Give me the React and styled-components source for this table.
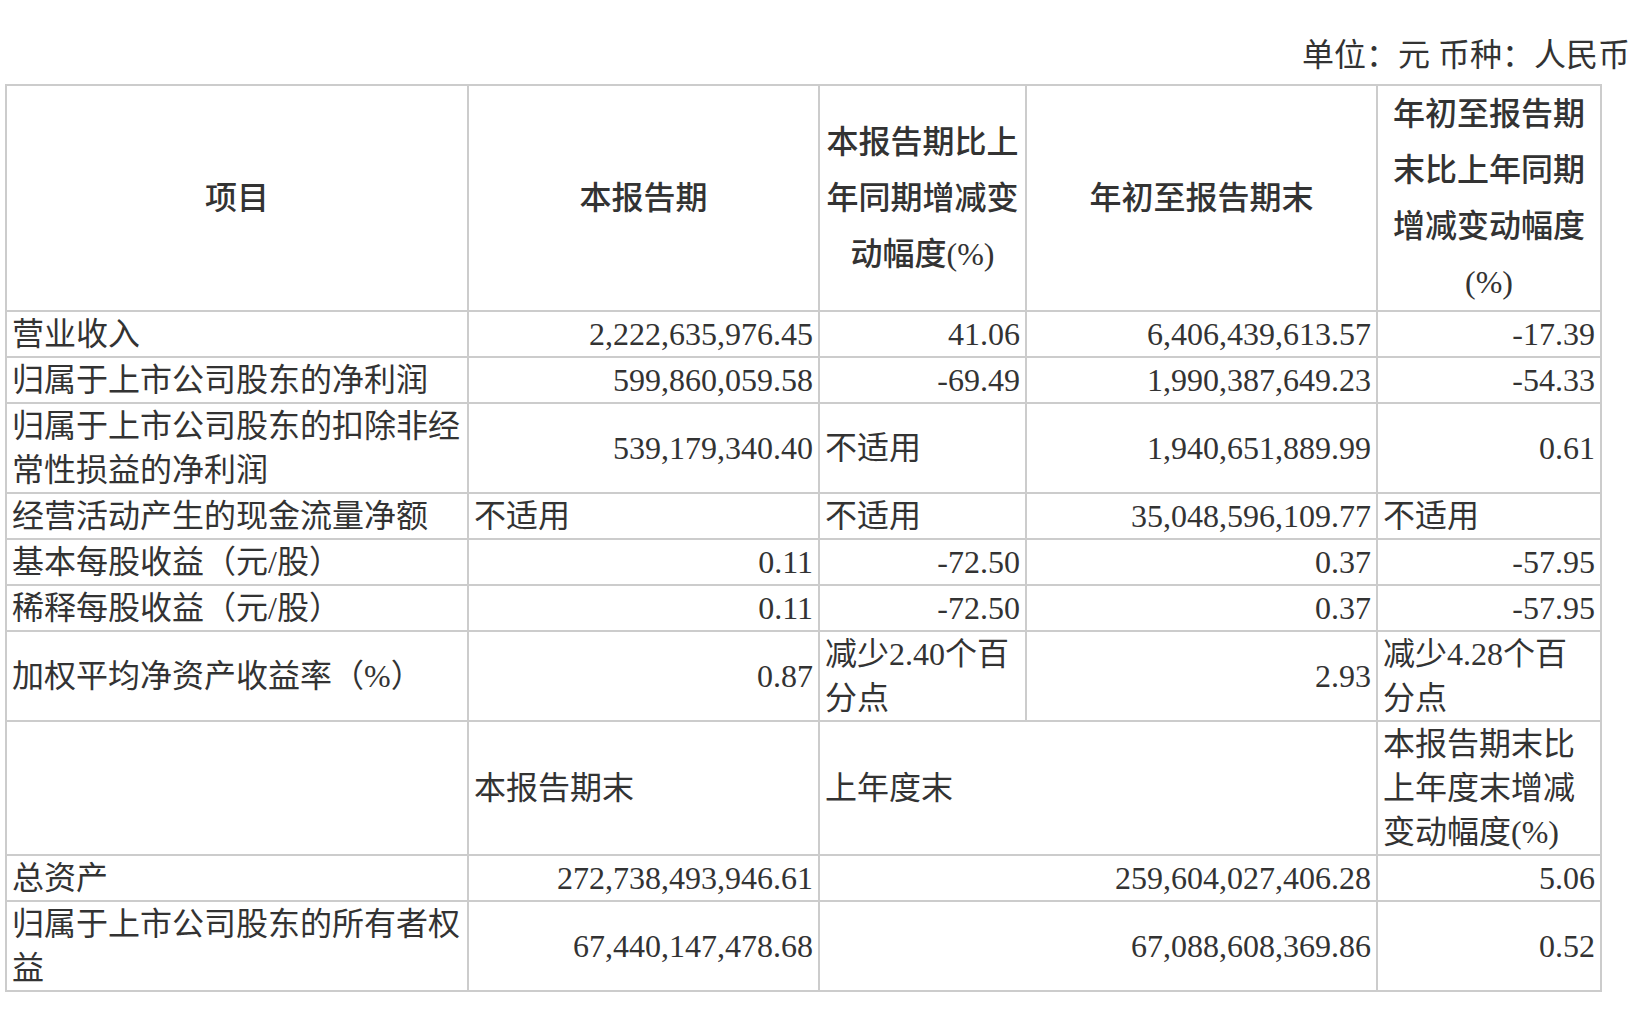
import React from "react";
import styled, { createGlobalStyle } from "styled-components";

const GlobalStyle = createGlobalStyle`
  html, body { margin: 0; padding: 0; background: #ffffff; }
  body {
    font-family: "Liberation Serif", "Noto Sans CJK SC", serif;
    color: #333333;
  }
`;

const Page = styled.div`
  width: 1650px;
  padding: 33px 0 0 5px;
  box-sizing: border-box;
`;

const Unit = styled.div`
  font-size: 32px;
  line-height: 44px;
  text-align: right;
  padding-right: 20px;
  margin-bottom: 7px;
  white-space: pre;
`;

const Table = styled.table`
  border-collapse: collapse;
  table-layout: fixed;
  width: 1595px;
  font-size: 32px;
`;

const HeadCell = styled.th`
  border: 2px solid #cccccc;
  padding: 0 5px;
  line-height: 56px;
  font-weight: 500;
  text-align: center;
  vertical-align: middle;
  color: #333333;
`;

const Cell = styled.td`
  border: 2px solid #cccccc;
  padding: 0 5px;
  line-height: 44px;
  text-align: ${(p) => (p.$num ? "right" : "left")};
  vertical-align: middle;
  color: #333333;
  word-break: normal;
`;

const cols = [462, 351, 207, 351, 224];

const rows = [
  ["营业收入", "2,222,635,976.45", "41.06", "6,406,439,613.57", "-17.39"],
  ["归属于上市公司股东的净利润", "599,860,059.58", "-69.49", "1,990,387,649.23", "-54.33"],
  ["归属于上市公司股东的扣除非经常性损益的净利润", "539,179,340.40", "不适用", "1,940,651,889.99", "0.61"],
  ["经营活动产生的现金流量净额", "不适用", "不适用", "35,048,596,109.77", "不适用"],
  ["基本每股收益（元/股）", "0.11", "-72.50", "0.37", "-57.95"],
  ["稀释每股收益（元/股）", "0.11", "-72.50", "0.37", "-57.95"],
  ["加权平均净资产收益率（%）", "0.87", "减少2.40个百分点", "2.93", "减少4.28个百分点"],
];

const isNum = (v) => /^-?[\d,.]+$/.test(v);

const bottomRows = [
  ["总资产", "272,738,493,946.61", "259,604,027,406.28", "5.06"],
  ["归属于上市公司股东的所有者权益", "67,440,147,478.68", "67,088,608,369.86", "0.52"],
];

export default function App() {
  return (
    <Page>
      <GlobalStyle />
      <Unit>单位：元 币种：人民币</Unit>
      <Table>
        <colgroup>
          {cols.map((w, i) => (
            <col key={i} style={{ width: w }} />
          ))}
        </colgroup>
        <thead>
          <tr>
            <HeadCell>项目</HeadCell>
            <HeadCell>本报告期</HeadCell>
            <HeadCell>本报告期比上年同期增减变动幅度(%)</HeadCell>
            <HeadCell>年初至报告期末</HeadCell>
            <HeadCell>年初至报告期末比上年同期增减变动幅度(%)</HeadCell>
          </tr>
        </thead>
        <tbody>
          {rows.map((r, i) => (
            <tr key={i}>
              {r.map((v, j) => (
                <Cell key={j} $num={j > 0 && isNum(v)}>
                  {v}
                </Cell>
              ))}
            </tr>
          ))}
          <tr>
            <Cell></Cell>
            <Cell>本报告期末</Cell>
            <Cell colSpan={2}>上年度末</Cell>
            <Cell>本报告期末比上年度末增减变动幅度(%)</Cell>
          </tr>
          {bottomRows.map((r, i) => (
            <tr key={`b${i}`}>
              <Cell>{r[0]}</Cell>
              <Cell $num>{r[1]}</Cell>
              <Cell $num colSpan={2}>
                {r[2]}
              </Cell>
              <Cell $num>{r[3]}</Cell>
            </tr>
          ))}
        </tbody>
      </Table>
    </Page>
  );
}
